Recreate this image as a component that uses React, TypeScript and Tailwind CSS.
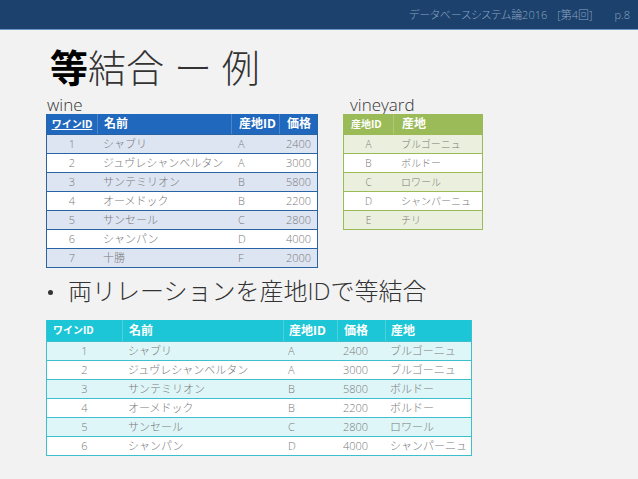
import React from "react";

type Col = { w: string; pad: string; head?: string };

const wineCols: Col[] = [
  { w: "w-[50px]", pad: "justify-center" },
  { w: "w-[134px]", pad: "pl-[6px]" },
  { w: "w-[48px]", pad: "pl-[7px]" },
  { w: "w-[38px]", pad: "pl-[7px]" },
];

const vineCols: Col[] = [
  { w: "w-[49px]", pad: "justify-center", head: "pl-[7px]" },
  { w: "w-[89px]", pad: "pl-[8px]" },
];

const joinCols: Col[] = [
  { w: "w-[75px]", pad: "justify-center", head: "pl-[6px]" },
  { w: "w-[161px]", pad: "pl-[6px]" },
  { w: "w-[54px]", pad: "pl-[5px]" },
  { w: "w-[48px]", pad: "pl-[6px]" },
  { w: "w-[86px]", pad: "pl-[5px]" },
];

const wineRows = [
  ["1", "シャブリ", "A", "2400"],
  ["2", "ジュヴレシャンベルタン", "A", "3000"],
  ["3", "サンテミリオン", "B", "5800"],
  ["4", "オーメドック", "B", "2200"],
  ["5", "サンセール", "C", "2800"],
  ["6", "シャンパン", "D", "4000"],
  ["7", "十勝", "F", "2000"],
];

const vineRows = [
  ["A", "ブルゴーニュ"],
  ["B", "ボルドー"],
  ["C", "ロワール"],
  ["D", "シャンパーニュ"],
  ["E", "チリ"],
];

const joinRows = [
  ["1", "シャブリ", "A", "2400", "ブルゴーニュ"],
  ["2", "ジュヴレシャンベルタン", "A", "3000", "ブルゴーニュ"],
  ["3", "サンテミリオン", "B", "5800", "ボルドー"],
  ["4", "オーメドック", "B", "2200", "ボルドー"],
  ["5", "サンセール", "C", "2800", "ロワール"],
  ["6", "シャンパン", "D", "4000", "シャンパーニュ"],
];

function DataTable({
  cols,
  head,
  rows,
  outer,
  headCls,
  odd,
  even,
  line,
  size,
}: {
  cols: Col[];
  head: React.ReactNode[];
  rows: string[][];
  outer: string;
  headCls: string;
  odd: string;
  even: string;
  line: string;
  size: string;
}) {
  return (
    <div className={`border-x border-b ${outer}`}>
      <div className={`flex ${headCls}`}>
        {head.map((h, i) => (
          <div
            key={i}
            className={`${cols[i].w} flex items-center ${cols[i].head ?? cols[i].pad} ${i > 0 ? "border-l border-white/20" : ""} font-bold text-white`}
          >
            {h}
          </div>
        ))}
      </div>
      {rows.map((r, ri) => (
        <div key={ri} className={`flex h-[19px] border-t ${line} ${ri % 2 === 0 ? odd : even}`}>
          {r.map((c, ci) => (
            <div key={ci} className={`${cols[ci].w} flex items-center ${cols[ci].pad} ${size} text-[#7a7a7a] font-light`}>
              {c}
            </div>
          ))}
        </div>
      ))}
    </div>
  );
}

export default function App() {
  return (
    <div className="w-[638px] h-[479px] bg-[#f2f2f2] overflow-hidden font-['Open_Sans','Noto_Sans_CJK_JP',sans-serif]">
      <div className="h-[30px] bg-[#1b416c] border-b border-[#6b97c4] flex items-center justify-end pr-[8px] pt-[2px] text-[11px] text-[#8ca3c0] font-light [font-feature-settings:'palt']">
        <span>データベースシステム論2016</span>
        <span className="ml-[10px]">[第4回]</span>
        <span className="ml-[22px]">p.8</span>
      </div>

      <div className="pl-[46px]">
        <div className="mt-[15px] h-[45px] pl-[4px] leading-[45px] text-[38px] text-[#333]">
          <span className="font-bold text-black">等</span>
          <span className="font-extralight">結合 ー 例</span>
        </div>

        <div className="flex gap-[25px]">
          <div className="flex flex-col">
            <div className="h-[24px] pt-[5px] pl-[1px] leading-[20px] text-[17px] font-light text-[#333]">wine</div>
            <DataTable
              cols={wineCols}
              head={[
                <span className="text-[10px] underline">ワインID</span>,
                <span className="text-[12px]">名前</span>,
                <span className="text-[12px]">産地ID</span>,
                <span className="text-[12px]">価格</span>,
              ]}
              rows={wineRows}
              outer="border-[#2a63a3]"
              headCls="h-[20px] bg-[#1f68bd]"
              odd="bg-[#dde5f2]"
              even="bg-white"
              line="border-[#2a63a3]"
              size="text-[11px]"
            />
          </div>
          <div className="flex flex-col">
            <div className="h-[24px] pt-[5px] pl-[7px] leading-[20px] text-[17px] font-light text-[#333]">vineyard</div>
            <DataTable
              cols={vineCols}
              head={[<span className="text-[10px]">産地ID</span>, <span className="text-[12px]">産地</span>]}
              rows={vineRows}
              outer="border-[#9bbb59]"
              headCls="h-[20px] bg-[#9bbb59]"
              odd="bg-[#eaf0dd]"
              even="bg-white"
              line="border-[#9bbb59]"
              size="text-[10px]"
            />
          </div>
        </div>

        <div className="mt-[7px] h-[32px] leading-[32px] text-[24px] font-light text-[#333] flex items-center">
          <span className="w-[22px] flex items-center pl-[2px] pt-[2px]">
            <span className="block w-[5px] h-[5px] rounded-full bg-[#333]" />
          </span>
          <span>両リレーションを産地IDで等結合</span>
        </div>

        <div className="mt-[13px] w-[426px]">
          <DataTable
            cols={joinCols}
            head={[
              <span className="text-[10px]">ワインID</span>,
              <span className="text-[12px]">名前</span>,
              <span className="text-[12px]">産地ID</span>,
              <span className="text-[12px]">価格</span>,
              <span className="text-[12px]">産地</span>,
            ]}
            rows={joinRows}
            outer="border-[#3dbfcd]"
            headCls="h-[21px] bg-[#1dc6d6]"
            odd="bg-[#dff6f8]"
            even="bg-white"
            line="border-[#3dbfcd]"
            size="text-[11px]"
          />
        </div>
      </div>
    </div>
  );
}
